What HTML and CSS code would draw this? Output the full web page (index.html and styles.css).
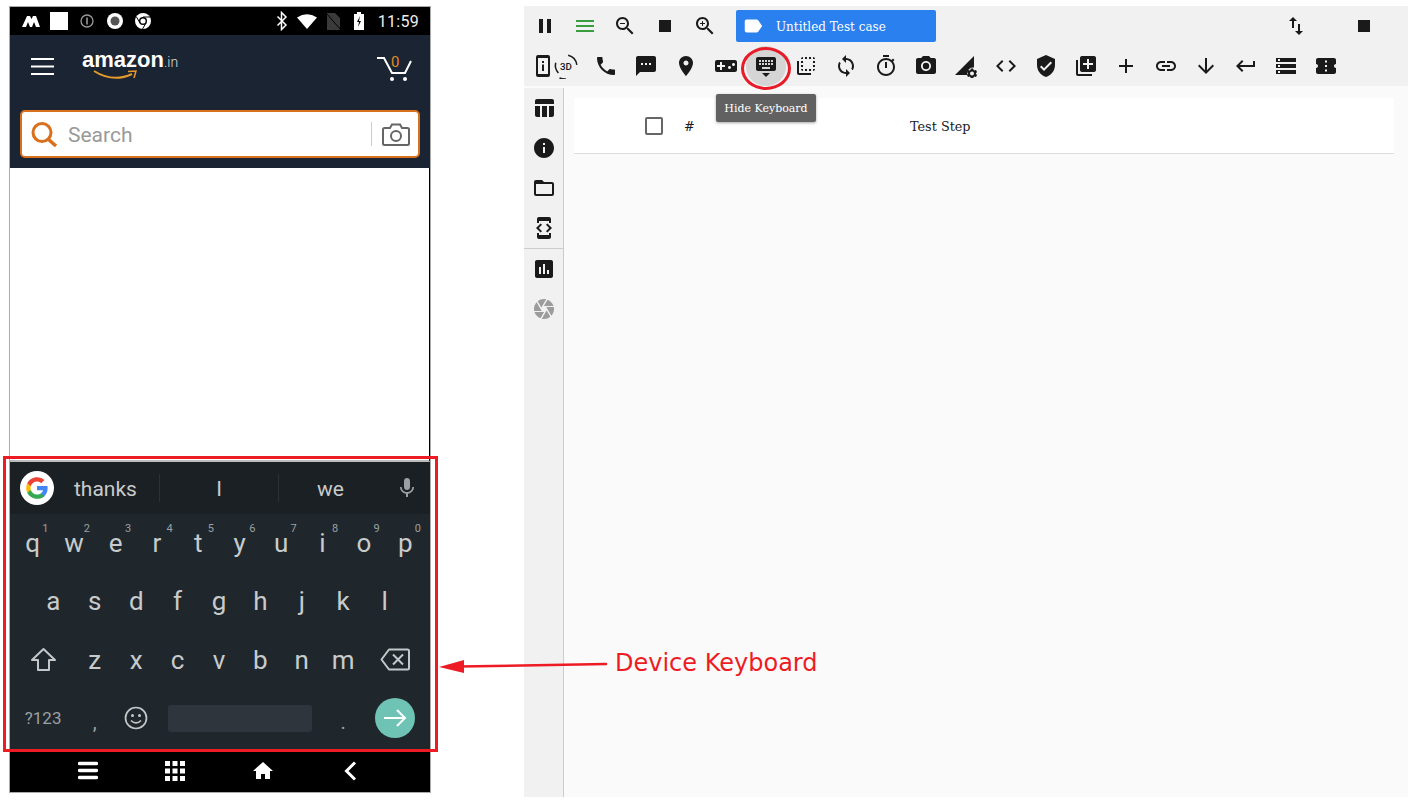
FILE: index.html
```html
<!DOCTYPE html>
<html>
<head>
  <title>Device Keyboard</title>
  <link rel="stylesheet" href="styles.css">
</head>
<body>
  <div class="phone">
    <div class="status-bar">
      <svg class="st-m" viewBox="0 0 18 12"><path d="M0 12 5 1h3l1.500 3L11 1h3l4 11h-4l-2-5-2 5H8L6 7l-2 5z" fill="#fff"/></svg>
      <span class="st-square"></span>
      <svg class="st-info" viewBox="0 0 14 14"><circle cx="7" cy="7" r="6" fill="none" stroke="#999" stroke-width="1.300"/><path d="M6.200 3.500h1.600v7H6.200z" fill="#999"/></svg>
      <svg class="st-rec" viewBox="0 0 16 16"><circle cx="8" cy="8" r="8" fill="#fff"/><circle cx="8" cy="8" r="4.500" fill="#555"/></svg>
      <svg class="st-chrome" viewBox="0 0 16 16"><circle cx="8" cy="8" r="8" fill="#fff"/><circle cx="8" cy="8" r="4" fill="#000"/><circle cx="8" cy="8" r="2.600" fill="#fff"/><path d="M8 4h7M5 10 1.500 4M11 10l-3.500 6" stroke="#000" stroke-width="1"/></svg>
      <div class="st-right">
        <svg class="st-bt" viewBox="0 0 12 20"><path d="M1.500 5.500 10 14l-4.500 4.500v-17L10 6l-8.500 8.500" fill="none" stroke="#fff" stroke-width="1.500"/></svg>
        <svg class="st-wifi" viewBox="0 0 20 15"><path d="M0 3.500Q10-3 20 3.500L10 15z" fill="#fff"/></svg>
        <svg class="st-sim" viewBox="0 0 13 17"><path d="M0 0h8l5 5v12H0z" fill="#3a3a3a"/><path d="M0 1l13 15" stroke="#000" stroke-width="1"/></svg>
        <svg class="st-batt" viewBox="0 0 10 18"><path d="M3 0h4v2h3v16H0V2h3z" fill="#fff"/><path d="M6 4 3 10h2l-1 5 3-6H5z" fill="#000"/></svg>
        <span class="st-time">11:59</span>
      </div>
    </div>

    <div class="amz-header">
      <div class="amz-top">
        <svg class="amz-menu" viewBox="0 0 23 17"><path d="M0 1h23M0 8.500h23M0 16h23" stroke="#fff" stroke-width="2"/></svg>
        <div class="amz-logo">
          <span class="amz-name">amazon</span><span class="amz-tld">.in</span>
          <svg class="amz-smile" viewBox="0 0 44 10"><path d="M1 1Q20 13 39 4" fill="none" stroke="#e59a2c" stroke-width="2"/><path d="M35 1.500 43 1l-2 7" fill="none" stroke="#e59a2c" stroke-width="1.500"/></svg>
        </div>
        <div class="amz-cart">
          <svg viewBox="0 0 36 26"><path d="M1 2h7l8 15h13l6-12" fill="none" stroke="#fff" stroke-width="2"/><circle cx="16" cy="23" r="2" fill="#fff"/><circle cx="29" cy="23" r="2" fill="#fff"/></svg>
          <span class="amz-count">0</span>
        </div>
      </div>
      <div class="amz-search">
        <svg class="amz-glass" viewBox="0 0 27 25"><circle cx="11" cy="10.500" r="9" fill="none" stroke="#d9701e" stroke-width="3"/><path d="M17 17l8 7" stroke="#d9701e" stroke-width="3.500"/></svg>
        <span class="amz-placeholder">Search</span>
        <span class="amz-divider"></span>
        <svg class="amz-camera" viewBox="0 0 28 23"><path d="M2.500 5H8l2-3.500h8L20 5h5.500Q27 5 27 6.500v14q0 1.500-1.500 1.500h-23Q1 22 1 20.500v-14Q1 5 2.500 5z" fill="none" stroke="#666" stroke-width="2"/><circle cx="14" cy="13" r="5" fill="none" stroke="#666" stroke-width="2"/></svg>
      </div>
    </div>

    <div class="blank-page"></div>

    <div class="keyboard">
      <div class="suggestions">
        <span class="g-badge">
          <svg viewBox="0 0 24 24">
            <path d="M21.800 12.200c0-.7-.1-1.300-.2-2H12v3.800h5.500c-.2 1.300-1 2.300-2 3v2.500h3.300c1.900-1.800 3-4.400 3-7.300z" fill="#4285f4"/>
            <path d="M12 22c2.700 0 5-.9 6.800-2.500L15.500 17c-.9.600-2.100 1-3.500 1-2.600 0-4.900-1.800-5.700-4.200H3v2.600C4.600 19.700 8 22 12 22z" fill="#34a853"/>
            <path d="M6.300 13.800c-.4-1.200-.4-2.500 0-3.600V7.600H3c-1.300 2.700-1.300 6.100 0 8.800z" fill="#fbbc05"/>
            <path d="M12 6c1.500 0 2.800.5 3.900 1.500l2.900-2.900C17 2.900 14.700 2 12 2 8 2 4.600 4.300 3 7.600l3.300 2.600C7.100 7.800 9.400 6 12 6z" fill="#ea4335"/>
          </svg>
        </span>
        <span class="sugg sugg-a">thanks</span>
        <span class="sugg sugg-b">I</span>
        <span class="sugg sugg-c">we</span>
        <svg class="mic" viewBox="0 0 24 24"><path d="M12 14c1.700 0 3-1.300 3-3V5c0-1.700-1.300-3-3-3S9 3.300 9 5v6c0 1.700 1.300 3 3 3zm5.300-3c0 3-2.500 5.100-5.300 5.100S6.700 14 6.700 11H5c0 3.400 2.700 6.200 6 6.700V21h2v-3.300c3.300-.5 6-3.300 6-6.700z" fill="#9aa0a3"/></svg>
      </div>

      <div class="key-row">
        <span class="key">q<sup>1</sup></span>
        <span class="key">w<sup>2</sup></span>
        <span class="key">e<sup>3</sup></span>
        <span class="key">r<sup>4</sup></span>
        <span class="key">t<sup>5</sup></span>
        <span class="key">y<sup>6</sup></span>
        <span class="key">u<sup>7</sup></span>
        <span class="key">i<sup>8</sup></span>
        <span class="key">o<sup>9</sup></span>
        <span class="key">p<sup>0</sup></span>
      </div>
      <div class="key-row">
        <span class="key">a</span>
        <span class="key">s</span>
        <span class="key">d</span>
        <span class="key">f</span>
        <span class="key">g</span>
        <span class="key">h</span>
        <span class="key">j</span>
        <span class="key">k</span>
        <span class="key">l</span>
      </div>
      <div class="key-row">
        <span class="key key-wide">
          <svg class="shift" viewBox="0 0 27 25"><path d="M13.500 2 25 13h-6v10H8V13H2z" fill="none" stroke="#c4c8ca" stroke-width="2" stroke-linejoin="round"/></svg>
        </span>
        <span class="key">z</span>
        <span class="key">x</span>
        <span class="key">c</span>
        <span class="key">v</span>
        <span class="key">b</span>
        <span class="key">n</span>
        <span class="key">m</span>
        <span class="key key-wide">
          <svg class="backspace" viewBox="0 0 30 23"><path d="M9 1.500h18.500q1.500 0 1.500 1.500v17q0 1.500-1.500 1.500H9L1.500 11.500z" fill="none" stroke="#c4c8ca" stroke-width="2" stroke-linejoin="round"/><path d="M13 6.500l10 10M23 6.500l-10 10" stroke="#c4c8ca" stroke-width="2"/></svg>
        </span>
      </div>
      <div class="key-row key-row-last">
        <span class="key key-wide key-sym">?123</span>
        <span class="key key-punct">,</span>
        <span class="key">
          <svg class="emoji" viewBox="0 0 24 24"><circle cx="12" cy="12" r="10.500" fill="none" stroke="#c4c8ca" stroke-width="1.700"/><circle cx="8.500" cy="9.500" r="1.500" fill="#c4c8ca"/><circle cx="15.500" cy="9.500" r="1.500" fill="#c4c8ca"/><path d="M7 14.500q5 5 10 0" fill="none" stroke="#c4c8ca" stroke-width="1.700"/></svg>
        </span>
        <span class="key key-space"><span class="space-bar"></span></span>
        <span class="key key-punct">.</span>
        <span class="key key-wide">
          <span class="enter-key">
            <svg viewBox="0 0 24 24"><path d="M1 12h21M14 4l8 8-8 8" fill="none" stroke="#fff" stroke-width="2"/></svg>
          </span>
        </span>
      </div>
    </div>

    <div class="nav-bar">
      <span class="nav-item"><svg class="nav-menu" viewBox="0 0 20 19"><path d="M1.500 2.500h17M1.500 9.500h17M1.500 16.500h17" stroke="#fff" stroke-width="3.400" stroke-linecap="round"/></svg></span>
      <span class="nav-item"><svg class="nav-grid" viewBox="0 0 20 20"><path d="M0 0h5v5H0zm7.500 0h5v5h-5zM15 0h5v5h-5zM0 7.500h5v5H0zm7.500 0h5v5h-5zm7.500 0h5v5h-5zM0 15h5v5H0zm7.500 0h5v5h-5zm7.500 0h5v5h-5z" fill="#fff"/></svg></span>
      <span class="nav-item"><svg class="nav-home" viewBox="0 0 20 17"><path d="M10 0 20 9h-3v8h-5v-5H8v5H3V9H0z" fill="#fff"/></svg></span>
      <span class="nav-item"><svg class="nav-back" viewBox="0 0 13 20"><path d="M11 1.500 2.500 10l8.500 8.500" fill="none" stroke="#fff" stroke-width="3"/></svg></span>
    </div>
  </div>

  <div class="app">
    <div class="tool-row">
      <span class="tool"><svg viewBox="0 0 24 24"><path d="M6 19h4V5H6v14zm8-14v14h4V5h-4z"/></svg></span>
      <span class="tool tool-green"><svg viewBox="0 0 24 24"><path d="M3 18h18v-2H3v2zm0-5h18v-2H3v2zm0-7v2h18V6H3z"/></svg></span>
      <span class="tool"><svg viewBox="0 0 24 24"><path d="M15.500 14h-.79l-.28-.27C15.410 12.590 16 11.110 16 9.500 16 5.910 13.090 3 9.500 3S3 5.910 3 9.500 5.910 16 9.500 16c1.610 0 3.090-.59 4.230-1.570l.27.28v.79l5 4.990L20.490 19l-4.990-5zm-6 0C7.010 14 5 11.990 5 9.500S7.010 5 9.500 5 14 7.010 14 9.500 11.990 14 9.500 14zM7 9h5v1H7z"/></svg></span>
      <span class="tool"><svg viewBox="0 0 24 24"><path d="M6 6h12v12H6z"/></svg></span>
      <span class="tool"><svg viewBox="0 0 24 24"><path d="M15.500 14h-.79l-.28-.27C15.410 12.590 16 11.110 16 9.500 16 5.910 13.090 3 9.500 3S3 5.910 3 9.500 5.910 16 9.500 16c1.610 0 3.090-.59 4.230-1.570l.27.28v.79l5 4.990L20.490 19l-4.990-5zm-6 0C7.010 14 5 11.990 5 9.500S7.010 5 9.500 5 14 7.010 14 9.500 11.990 14 9.500 14z"/><path d="M12 10h-2v2H9v-2H7V9h2V7h1v2h2v1z"/></svg></span>
      <div class="case-chip">
        <svg viewBox="0 0 24 24"><path d="M17.630 5.840C17.270 5.330 16.670 5 16 5L5 5.010C3.900 5.010 3 5.900 3 7v10c0 1.100.9 1.990 2 1.990L16 19c.67 0 1.270-.33 1.630-.84L22 12l-4.370-6.160z"/></svg>
        <span class="case-name">Untitled Test case</span>
      </div>
      <div class="tool-row-end">
        <span class="tool"><svg viewBox="0 0 24 24"><path d="M16 17.010V10h-2v7.010h-3L15 21l4-3.990h-3zM9 3L5 6.990h3V14h2V6.990h3L9 3z"/></svg></span>
        <span class="tool"><svg viewBox="0 0 24 24"><path d="M6 6h12v12H6z"/></svg></span>
      </div>
    </div>

    <div class="tool-row tool-row-second">
      <span class="tool tool-device"><svg viewBox="0 0 24 24"><path d="M7 1h10q2 0 2 2v18q0 2-2 2H7q-2 0-2-2V3q0-2 2-2zm0 3v16h10V4zm4 3h2v2h-2zm0 3.500h2V17h-2z" fill-rule="evenodd"/></svg></span>
      <span class="tool tool-3d">
        <svg viewBox="0 0 24 24">
          <path d="M5 18.500A10.500 10.500 0 0 1 2.500 9M14 2a10.500 10.500 0 0 1 8 9" fill="none" stroke="#1a1a1a" stroke-width="1.400"/>
          <path d="M6 23a11 11 0 0 0 6 1" fill="none" stroke="#1a1a1a" stroke-width="1.400"/>
          <text x="12" y="16" class="label-3d">3D</text>
        </svg>
      </span>
      <span class="tool"><svg viewBox="0 0 24 24"><path d="M6.620 10.790c1.440 2.830 3.760 5.140 6.590 6.590l2.200-2.200c.27-.27.67-.36 1.020-.24 1.120.37 2.330.57 3.570.57.55 0 1 .45 1 1V20c0 .55-.45 1-1 1-9.390 0-17-7.610-17-17 0-.55.45-1 1-1h3.500c.55 0 1 .45 1 1 0 1.250.2 2.450.57 3.570.11.35.03.74-.25 1.020l-2.200 2.200z"/></svg></span>
      <span class="tool"><svg viewBox="0 0 24 24"><path d="M20 2H4c-1.100 0-1.990.9-1.990 2L2 22l4-4h14c1.100 0 2-.9 2-2V4c0-1.100-.9-2-2-2zM9 11H7V9h2v2zm4 0h-2V9h2v2zm4 0h-2V9h2v2z"/></svg></span>
      <span class="tool"><svg viewBox="0 0 24 24"><path d="M12 2C8.130 2 5 5.130 5 9c0 5.250 7 13 7 13s7-7.750 7-13c0-3.870-3.130-7-7-7zm0 9.500c-1.380 0-2.500-1.120-2.500-2.500s1.120-2.500 2.500-2.500 2.500 1.120 2.500 2.500-1.120 2.500-2.500 2.500z"/></svg></span>
      <span class="tool"><svg viewBox="0 0 24 24"><path d="M21 6H3c-1.100 0-2 .9-2 2v8c0 1.100.9 2 2 2h18c1.100 0 2-.9 2-2V8c0-1.100-.9-2-2-2zm-10 7H8v3H6v-3H3v-2h3V8h2v3h3v2zm4.500 2c-.83 0-1.500-.67-1.500-1.500s.67-1.500 1.500-1.500 1.500.67 1.500 1.500-.67 1.500-1.500 1.500zm4-3c-.83 0-1.500-.67-1.500-1.500S18.670 9 19.500 9s1.500.67 1.500 1.500-.67 1.500-1.500 1.500z"/></svg></span>
      <span class="tool tool-active"><svg viewBox="0 0 24 24"><path d="M20 3H4c-1.100 0-1.990.9-1.990 2L2 15c0 1.100.9 2 2 2h16c1.100 0 2-.9 2-2V5c0-1.100-.9-2-2-2zm-9 3h2v2h-2V6zm0 3h2v2h-2V9zM8 6h2v2H8V6zm0 3h2v2H8V9zm-1 2H5V9h2v2zm0-3H5V6h2v2zm9 7H8v-2h8v2zm0-4h-2V9h2v2zm0-3h-2V6h2v2zm3 3h-2V9h2v2zm0-3h-2V6h2v2zm-7 15l4-4H8l4 4z"/></svg></span>
      <span class="tool"><svg viewBox="0 0 24 24"><path d="M9 7H7v2h2V7zm0 4H7v2h2v-2zm0-8c-1.110 0-2 .9-2 2h2V3zm4 12h-2v2h2v-2zm6-12v2h2c0-1.100-.9-2-2-2zm-6 0h-2v2h2V3zM9 17v-2H7c0 1.100.89 2 2 2zm10-4h2v-2h-2v2zm0-4h2V7h-2v2zm0 8c1.100 0 2-.9 2-2h-2v2zM5 7H3v12c0 1.100.89 2 2 2h12v-2H5V7zm10-2h2V3h-2v2zm0 12h2v-2h-2v2z"/></svg></span>
      <span class="tool"><svg viewBox="0 0 24 24"><path d="M12 4V1L8 5l4 4V6c3.310 0 6 2.690 6 6 0 1.010-.25 1.970-.7 2.800l1.460 1.460C19.540 15.030 20 13.570 20 12c0-4.420-3.580-8-8-8zm0 14c-3.310 0-6-2.690-6-6 0-1.010.25-1.970.7-2.800L5.240 7.740C4.460 8.970 4 10.430 4 12c0 4.420 3.580 8 8 8v3l4-4-4-4v3z"/></svg></span>
      <span class="tool"><svg viewBox="0 0 24 24"><path d="M15 1H9v2h6V1zm-4 13h2V8h-2v6zm8.030-6.610l1.420-1.420c-.43-.51-.9-.99-1.410-1.410l-1.420 1.420C16.070 4.740 14.120 4 12 4c-4.970 0-9 4.030-9 9s4.020 9 9 9 9-4.030 9-9c0-2.120-.74-4.070-1.970-5.610zM12 20c-3.870 0-7-3.130-7-7s3.130-7 7-7 7 3.130 7 7-3.130 7-7 7z"/></svg></span>
      <span class="tool"><svg viewBox="0 0 24 24"><circle cx="12" cy="12" r="3.200"/><path d="M9 2L7.170 4H4c-1.100 0-2 .9-2 2v12c0 1.100.9 2 2 2h16c1.100 0 2-.9 2-2V6c0-1.100-.9-2-2-2h-3.170L15 2H9zm3 15c-2.760 0-5-2.240-5-5s2.240-5 5-5 5 2.240 5 5-2.240 5-5 5z"/></svg></span>
      <span class="tool"><svg viewBox="0 0 24 24"><path d="M1 21 20 2v11.500a6 6 0 0 0-6.500 7.500z"/><path d="M19 14.500l1 2 2-.4 1 1.800-1.200 1.600 1.200 1.600-1 1.800-2-.4-1 2h-2l-1-2-2 .4-1-1.800 1.200-1.600-1.200-1.600 1-1.800 2 .4 1-2zm-1 3a2 2 0 1 0 0 4 2 2 0 0 0 0-4z" fill-rule="evenodd"/></svg></span>
      <span class="tool"><svg viewBox="0 0 24 24"><path d="M9.400 16.600L4.800 12l4.600-4.600L8 6l-6 6 6 6 1.400-1.400zm5.200 0l4.600-4.600-4.600-4.600L16 6l6 6-6 6-1.400-1.400z"/></svg></span>
      <span class="tool"><svg viewBox="0 0 24 24"><path d="M12 1L3 5v6c0 5.550 3.840 10.740 9 12 5.160-1.260 9-6.450 9-12V5l-9-4zm-2 16l-4-4 1.410-1.410L10 14.170l6.590-6.590L18 9l-8 8z"/></svg></span>
      <span class="tool"><svg viewBox="0 0 24 24"><path d="M4 6H2v14c0 1.100.9 2 2 2h14v-2H4V6zm16-4H8c-1.100 0-2 .9-2 2v12c0 1.100.9 2 2 2h12c1.100 0 2-.9 2-2V4c0-1.100-.9-2-2-2zm-1 9h-4v4h-2v-4H9V9h4V5h2v4h4v2z"/></svg></span>
      <span class="tool"><svg viewBox="0 0 24 24"><path d="M19 13h-6v6h-2v-6H5v-2h6V5h2v6h6v2z"/></svg></span>
      <span class="tool"><svg viewBox="0 0 24 24"><path d="M3.900 12c0-1.710 1.390-3.100 3.100-3.100h4V7H7c-2.760 0-5 2.240-5 5s2.240 5 5 5h4v-1.900H7c-1.710 0-3.100-1.390-3.100-3.100zM8 13h8v-2H8v2zm9-6h-4v1.900h4c1.710 0 3.100 1.390 3.100 3.100s-1.390 3.100-3.100 3.100h-4V17h4c2.760 0 5-2.240 5-5s-2.240-5-5-5z"/></svg></span>
      <span class="tool"><svg viewBox="0 0 24 24"><path d="M20 12l-1.410-1.410L13 16.170V4h-2v12.170l-5.580-5.590L4 12l8 8 8-8z"/></svg></span>
      <span class="tool"><svg viewBox="0 0 24 24"><path d="M19 7v4H5.830l3.580-3.590L8 6l-6 6 6 6 1.410-1.410L5.830 13H21V7z"/></svg></span>
      <span class="tool"><svg viewBox="0 0 24 24"><path d="M2 20h20v-4H2v4zm2-3h2v2H4v-2zM2 4v4h20V4H2zm4 3H4V5h2v2zm-4 7h20v-4H2v4zm2-3h2v2H4v-2z"/></svg></span>
      <span class="tool"><svg viewBox="0 0 24 24"><path d="M22 10V6c0-1.110-.9-2-2-2H4c-1.100 0-1.990.89-1.990 2v4c1.100 0 1.990.9 1.990 2s-.89 2-2 2v4c0 1.100.9 2 2 2h16c1.100 0 2-.9 2-2v-4c-1.100 0-2-.9-2-2s.9-2 2-2zm-9 7.500h-2v-2h2v2zm0-4.500h-2v-2h2v2zm0-4.500h-2v-2h2v2z"/></svg></span>
      <span class="tooltip">Hide Keyboard</span>
    </div>

    <div class="workspace">
      <div class="rail">
        <span class="tool"><svg viewBox="0 0 24 24"><path d="M10 10.020h5V21h-5zM17 21h3c1.100 0 2-.9 2-2v-9h-5v11zm3-18H5c-1.100 0-2 .9-2 2v3h19V5c0-1.100-.9-2-2-2zM3 19c0 1.100.9 2 2 2h3V10H3v9z"/></svg></span>
        <span class="tool"><svg viewBox="0 0 24 24"><path d="M12 2C6.480 2 2 6.480 2 12s4.480 10 10 10 10-4.480 10-10S17.520 2 12 2zm1 15h-2v-6h2v6zm0-8h-2V7h2v2z"/></svg></span>
        <span class="tool"><svg viewBox="0 0 24 24"><path d="M20 6h-8l-2-2H4c-1.100 0-1.990.9-1.990 2L2 18c0 1.100.9 2 2 2h16c1.100 0 2-.9 2-2V8c0-1.100-.9-2-2-2zm0 12H4V8h16v10z"/></svg></span>
        <span class="tool"><svg viewBox="0 0 24 24"><path d="M7 5h10v2h2V3c0-1.100-.9-1.990-2-1.990L7 1c-1.100 0-2 .9-2 2v4h2V5zm8.410 11.590L20 12l-4.590-4.590L14 8.830 17.170 12 14 15.170l1.410 1.420zM10 15.170L6.830 12 10 8.830 8.590 7.410 4 12l4.590 4.590L10 15.170zM17 19H7v-2H5v4c0 1.100.9 2 2 2h10c1.100 0 2-.9 2-2v-4h-2v2z"/></svg></span>
        <span class="rail-divider"></span>
        <span class="tool"><svg viewBox="0 0 24 24"><path d="M19 3H5c-1.100 0-2 .9-2 2v14c0 1.100.9 2 2 2h14c1.100 0 2-.9 2-2V5c0-1.100-.9-2-2-2zM9 17H7v-7h2v7zm4 0h-2V7h2v10zm4 0h-2v-4h2v4z"/></svg></span>
        <span class="tool tool-muted"><svg viewBox="0 0 24 24"><path d="M9.400 10.500l4.770-8.260C13.470 2.090 12.750 2 12 2c-2.400 0-4.600.85-6.320 2.250l3.660 6.350.06-.1zM21.540 9c-.92-2.920-3.150-5.260-6-6.340L11.880 9h9.660zm.26 1h-7.490l.29.5 4.760 8.250C21 16.970 22 14.610 22 12c0-.69-.07-1.350-.2-2zM8.540 12l-3.900-6.750C3.010 7.030 2 9.390 2 12c0 .69.07 1.350.2 2h7.490l-1.150-2zm-6.080 3c.92 2.920 3.150 5.260 6 6.340L12.120 15H2.460zm11.270 0l-3.900 6.760c.7.150 1.420.24 2.170.24 2.400 0 4.600-.85 6.320-2.250l-3.660-6.350-.93 1.600z"/></svg></span>
      </div>
      <div class="steps">
        <div class="steps-head">
          <span class="check"></span>
          <span class="col-num">#</span>
          <span class="col-step">Test Step</span>
        </div>
      </div>
    </div>
  </div>

  <span class="callout-ring"></span>
  <span class="callout-box"></span>
  <svg class="callout-arrow" viewBox="0 0 170 16"><path d="M20 9.500 167 7" stroke="#ed1c24" stroke-width="2.500" stroke-linecap="round"/><path d="M0 10 25 3v13z" fill="#ed1c24"/></svg>
  <span class="callout-label">Device Keyboard</span>
</body>
</html>
```

FILE: styles.css
```css
html,
body {
  height: 100%;
  margin: 0;
}

body {
  background-color: #fff;
  box-sizing: border-box;
  color: #1a1a1a;
  display: flex;
  font-family: "Roboto", sans-serif;
  gap: 93px;
  overflow: hidden;
  padding: 6px 4px 4px 9px;
}

svg {
  display: block;
}

/* phone */

.phone {
  border: 1px solid #aaa;
  display: flex;
  flex-direction: column;
  flex-shrink: 0;
  height: 785px;
  width: 420px;
}

.status-bar {
  align-items: center;
  background-color: #000;
  display: flex;
  flex-shrink: 0;
  height: 28px;
  padding: 0 11px 0 12px;
}

.st-m { height: 12px; width: 18px; }
.st-square { background-color: #fff; height: 18px; margin-left: 10px; width: 18px; }
.st-info { height: 14px; margin-left: 12px; width: 14px; }
.st-rec { height: 16px; margin-left: 13px; width: 16px; }
.st-chrome { height: 16px; margin-left: 12px; width: 16px; }

.st-right {
  align-items: center;
  display: flex;
  margin-left: auto;
}

.st-bt { height: 20px; margin-right: 9px; width: 12px; }
.st-wifi { height: 15px; margin-right: 10px; width: 20px; }
.st-sim { height: 17px; margin-right: 14px; width: 13px; }
.st-batt { height: 18px; margin-right: 14px; width: 10px; }

.st-time {
  color: #eee;
  font-size: 16px;
  letter-spacing: .3px;
}

.amz-header {
  background-color: #1b2432;
  box-sizing: border-box;
  flex-shrink: 0;
  height: 133px;
  padding: 0 10px;
}

.amz-top {
  align-items: flex-start;
  box-sizing: border-box;
  display: flex;
  height: 75px;
  padding: 13px 8px 0 11px;
}

.amz-menu {
  height: 17px;
  margin-top: 10px;
  width: 23px;
}

.amz-logo {
  color: #fff;
  line-height: 24px;
  margin-left: 28px;
  position: relative;
}

.amz-name {
  font-family: "Liberation Sans", sans-serif;
  font-size: 22px;
  font-weight: 700;
}

.amz-tld {
  color: #ddd;
  font-size: 14px;
  font-weight: 300;
}

.amz-smile {
  height: 10px;
  left: 11px;
  position: absolute;
  top: 22px;
  width: 44px;
}

.amz-cart {
  margin-left: auto;
  margin-top: 8px;
  position: relative;
}

.amz-cart svg {
  height: 26px;
  width: 36px;
}

.amz-count {
  color: #e08a2c;
  font-size: 15px;
  left: 15px;
  line-height: 16px;
  position: absolute;
  top: -2px;
}

.amz-search {
  align-items: center;
  background-color: #fff;
  border: 2px solid #d9701e;
  border-radius: 5px;
  box-sizing: border-box;
  display: flex;
  height: 48px;
  padding: 0 8px 0 9px;
}

.amz-glass {
  height: 25px;
  width: 27px;
}

.amz-placeholder {
  color: #999;
  font-size: 21px;
  margin-left: 10px;
  padding-top: 2px;
}

.amz-divider {
  background-color: #ccc;
  height: 24px;
  margin-left: auto;
  width: 1px;
}

.amz-camera {
  height: 23px;
  margin-left: 10px;
  width: 28px;
}

.blank-page {
  background-color: #fff;
  border-bottom: 2px solid #bbb;
  border-right: 1px solid #000;
  flex: 1;
}

.keyboard {
  background-color: #20272c;
  color: #c8cbcc;
  flex-shrink: 0;
  height: 290px;
}

.suggestions {
  align-items: center;
  background-color: #1b2024;
  display: grid;
  grid-template-columns: 48px 91px 119px 104px 1fr;
  height: 52px;
  padding-left: 10px;
}

.g-badge {
  align-items: center;
  background-color: #fff;
  border-radius: 50%;
  display: flex;
  height: 34px;
  justify-content: center;
  width: 34px;
}

.g-badge svg {
  height: 26px;
  width: 26px;
}

.sugg {
  font-size: 21px;
  height: 28px;
  line-height: 30px;
  text-align: center;
}

.sugg-a {
  text-align: left;
  padding-left: 6px;
}

.sugg-b,
.sugg-c {
  border-left: 1px solid #2b3136;
}

.mic {
  height: 24px;
  justify-self: end;
  margin-right: 11px;
  width: 24px;
}

.key-row {
  display: flex;
  height: 58.500px;
  justify-content: center;
  padding: 0 4px 0 2px;
}

.key-row-last {
  height: 58px;
}

.key {
  align-items: center;
  display: flex;
  flex: 0 0 41.400px;
  font-size: 26px;
  justify-content: center;
  padding-bottom: 1px;
  position: relative;
}

.key sup {
  color: #9aa0a3;
  font-size: 11px;
  line-height: 12px;
  position: absolute;
  right: 5px;
  top: 9px;
}

.key-wide {
  flex-basis: 62px;
}

.key-sym {
  color: #9aa0a3;
  font-size: 17px;
}

.key-punct {
  color: #9aa0a3;
  font-size: 20px;
  padding-top: 8px;
}

.key-space {
  flex-basis: 165.600px;
}

.space-bar {
  background-color: #2e353c;
  border-radius: 3px;
  height: 27px;
  width: 144px;
}

.shift { height: 25px; width: 27px; }
.backspace { height: 23px; width: 30px; }
.emoji { height: 24px; width: 24px; }

.enter-key {
  align-items: center;
  background-color: #6fc3b4;
  border-radius: 50%;
  display: flex;
  height: 40px;
  justify-content: center;
  width: 40px;
}

.enter-key svg {
  height: 24px;
  width: 24px;
}

.nav-bar {
  align-items: center;
  background-color: #000;
  box-sizing: border-box;
  display: flex;
  flex: 0 0 40px;
  padding: 0 0 3px 34px;
}

.nav-item {
  display: flex;
  flex: 0 0 87.600px;
  justify-content: center;
}

.nav-menu { height: 19px; width: 20px; }
.nav-grid { height: 20px; width: 20px; }
.nav-home { height: 17px; width: 20px; }
.nav-back { height: 20px; width: 13px; }

/* app */

.app {
  background-color: #fafafa;
  display: flex;
  flex: 1;
  flex-direction: column;
  font-family: "DejaVu Serif", serif;
  height: 791px;
}

.tool-row {
  align-items: center;
  background-color: #f1f1f1;
  display: flex;
  height: 40px;
  padding-left: 1px;
  position: relative;
}

.tool-row-second {
  padding-left: 8px;
}

.tool {
  align-items: center;
  display: flex;
  flex: 0 0 40px;
  height: 40px;
  justify-content: center;
  min-width: 0;
}

.tool svg {
  fill: #1a1a1a;
  flex-shrink: 0;
  height: 24px;
  width: 24px;
}

.tool-green svg {
  fill: #3a9d3f;
}

.tool-muted svg {
  fill: #9c9c9c;
}

.tool-active {
  background-color: #d5d5d5;
  border-radius: 50%;
}

.tool-device {
  flex-basis: 22px;
}

.tool-3d {
  flex-basis: 24px;
  margin-right: 8px;
}

.tool-3d svg {
  height: 26px;
  width: 26px;
}

.label-3d {
  fill: #1a1a1a;
  font-family: "Roboto", sans-serif;
  font-size: 9px;
  font-weight: 500;
  text-anchor: middle;
}

.case-chip {
  align-items: center;
  background-color: #2a80ee;
  border-radius: 2px;
  box-sizing: border-box;
  color: #fff;
  display: flex;
  font-size: 12px;
  gap: 12px;
  height: 32px;
  margin-left: 11px;
  padding-left: 6px;
  width: 200px;
}

.case-chip svg {
  fill: #fff;
  height: 22px;
  width: 22px;
}

.case-name {
  padding-top: 1px;
}

.tool-row-end {
  display: flex;
  gap: 28px;
  margin-left: auto;
  padding-right: 24px;
}

.tooltip {
  background-color: #616161;
  border-radius: 2px;
  box-shadow: 0 1px 3px rgba(0, 0, 0, .35);
  color: #fff;
  font-size: 11px;
  left: 192px;
  line-height: 29px;
  height: 28px;
  position: absolute;
  text-align: center;
  top: 48px;
  width: 100px;
  z-index: 2;
}

.workspace {
  display: flex;
  flex: 1;
}

.rail {
  background-color: #f1f1f1;
  border-right: 1px solid #ccc;
  display: flex;
  flex: 0 0 39px;
  flex-direction: column;
  margin-top: 2px;
}

.rail-divider {
  background-color: #ccc;
  flex-shrink: 0;
  height: 1px;
  margin-right: -1px;
}

.steps {
  flex: 1;
  padding: 12px 14px 0 10px;
}

.steps-head {
  align-items: center;
  background-color: #fff;
  border-bottom: 1px solid #ddd;
  box-sizing: border-box;
  display: flex;
  font-size: 12.800px;
  height: 56px;
  padding: 1px 0 0 71px;
}

.check {
  border: 2px solid #666;
  border-radius: 2px;
  box-sizing: border-box;
  flex-shrink: 0;
  height: 18px;
  margin-right: 21px;
  width: 18px;
}

.col-num {
  flex: 0 0 226px;
}

/* annotations drawn over the screenshot */

.callout-ring {
  border: 3px solid #e81c28;
  border-radius: 50%;
  box-sizing: border-box;
  height: 43px;
  left: 741px;
  position: absolute;
  top: 47px;
  width: 50px;
}

.callout-box {
  border: 3px solid #ed1c24;
  box-sizing: border-box;
  height: 296px;
  left: 3px;
  position: absolute;
  top: 456px;
  width: 435px;
}

.callout-arrow {
  height: 16px;
  left: 439px;
  position: absolute;
  top: 657px;
  width: 170px;
}

.callout-label {
  color: #ed1c24;
  font-family: "DejaVu Sans", sans-serif;
  font-size: 24px;
  left: 615px;
  line-height: 30px;
  position: absolute;
  top: 648px;
}
```
